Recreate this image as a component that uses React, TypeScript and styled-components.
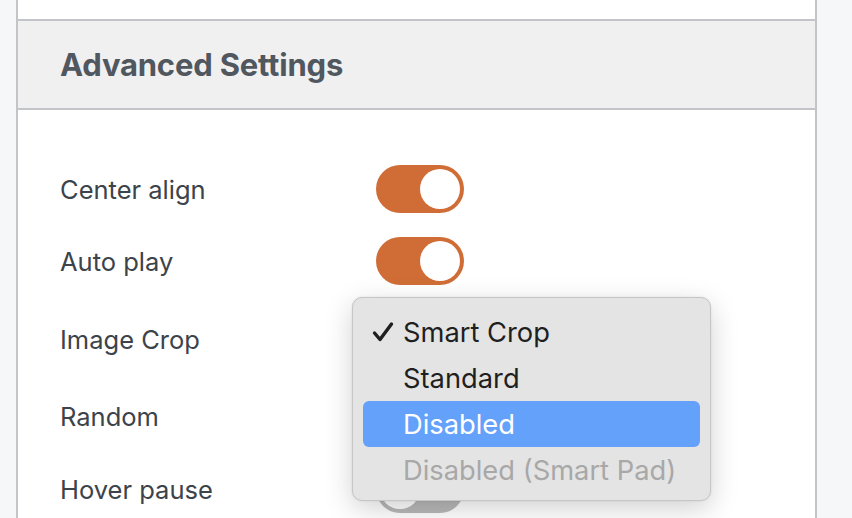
import React from "react";
import styled, { createGlobalStyle } from "styled-components";

const GlobalStyle = createGlobalStyle`
  html, body {
    margin: 0;
    padding: 0;
    background: #f6f7f8;
    font-family: Inter, "Noto Sans", "Liberation Sans", sans-serif;
    overflow: hidden;
  }
`;

const Page = styled.div`
  width: 852px;
  height: 518px;
  padding-left: 16px;
  box-sizing: border-box;
  position: relative;
  overflow: hidden;
`;

const Panel = styled.div`
  width: 801px;
  height: 100%;
  box-sizing: border-box;
  background: #fff;
  border-left: 2px solid #c3c4c7;
  border-right: 2px solid #c3c4c7;
`;

const TopGap = styled.div`
  height: 19px;
`;

const Header = styled.div`
  height: 87px;
  background: #f0f0f1;
  border-top: 2px solid #c3c4c7;
  border-bottom: 2px solid #c3c4c7;
  display: flex;
  align-items: center;
  padding-left: 42px;
`;

const Title = styled.h2`
  margin: 0;
  font-size: 31px;
  font-weight: 700;
  color: #50575e;
  letter-spacing: -0.2px;
`;

const Body = styled.div`
  padding: 43px 0 0 42px;
  display: flex;
  flex-direction: column;
`;

const Row = styled.div<{ $h: number }>`
  height: ${(p) => p.$h}px;
  display: flex;
  align-items: center;
`;

const Label = styled.span`
  width: 316px;
  font-size: 25.5px;
  color: #3c434a;
`;

const Toggle = styled.div<{ $on: boolean }>`
  width: 88px;
  height: 48px;
  border-radius: 24px;
  background: ${(p) => (p.$on ? "#d06d37" : "#b9b9b9")};
  display: flex;
  align-items: center;
  justify-content: ${(p) => (p.$on ? "flex-end" : "flex-start")};
  padding: 0 4px;
  box-sizing: border-box;
`;

const Knob = styled.div`
  width: 40px;
  height: 40px;
  border-radius: 50%;
  background: #fff;
`;

const Menu = styled.div`
  position: absolute;
  left: 352px;
  top: 297px;
  width: 359px;
  height: 204px;
  box-sizing: border-box;
  background: #e4e4e4;
  border: 1px solid #c6c6c6;
  border-radius: 10px;
  box-shadow: 0 8px 28px rgba(0, 0, 0, 0.18), 0 0 2px rgba(0, 0, 0, 0.1);
  padding: 11px 10px 0 10px;
  display: flex;
  flex-direction: column;
`;

const Item = styled.div<{ $active?: boolean; $disabled?: boolean }>`
  height: 46px;
  display: flex;
  align-items: center;
  padding-left: 40px;
  position: relative;
  border-radius: 6px;
  font-size: 27.3px;
  color: ${(p) => (p.$active ? "#fff" : p.$disabled ? "#a8a8a8" : "#1f1f1f")};
  background: ${(p) => (p.$active ? "#63a1fa" : "transparent")};
`;

const Check = styled.svg`
  position: absolute;
  left: 9px;
  top: 12px;
`;

const rows = [
  { label: "Center align", h: 72, toggle: true },
  { label: "Auto play", h: 72, toggle: true },
  { label: "Image Crop", h: 84 },
  { label: "Random", h: 70 },
  { label: "Hover pause", h: 76, toggle: false },
];

export default function App() {
  return (
    <>
      <GlobalStyle />
      <Page>
        <Panel>
          <TopGap />
          <Header>
            <Title>Advanced Settings</Title>
          </Header>
          <Body>
            {rows.map((r) => (
              <Row key={r.label} $h={r.h}>
                <Label>{r.label}</Label>
                {r.toggle !== undefined && (
                  <Toggle $on={r.toggle}>
                    <Knob />
                  </Toggle>
                )}
              </Row>
            ))}
          </Body>
        </Panel>
        <Menu>
          <Item>
            <Check width="22" height="22" viewBox="0 0 22 22">
              <path
                d="M2.5 12 L8 18.5 L19.5 3"
                fill="none"
                stroke="#1f1f1f"
                strokeWidth="3.4"
                strokeLinecap="round"
                strokeLinejoin="round"
              />
            </Check>
            Smart Crop
          </Item>
          <Item>Standard</Item>
          <Item $active>Disabled</Item>
          <Item $disabled>Disabled (Smart Pad)</Item>
        </Menu>
      </Page>
    </>
  );
}
